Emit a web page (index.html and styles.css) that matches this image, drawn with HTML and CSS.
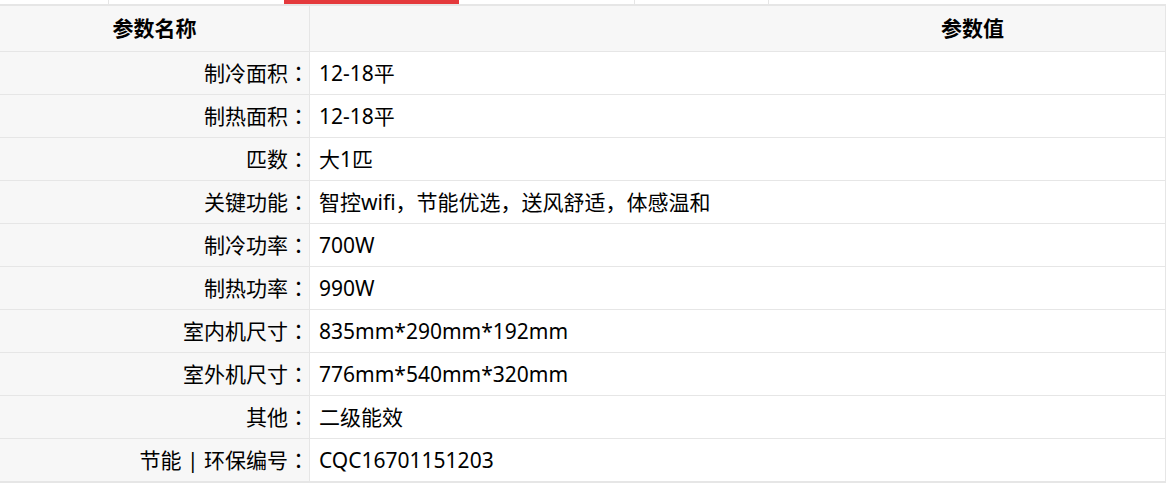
FILE: index.html
```html
<!DOCTYPE html>
<html lang="zh-CN">
<head>
<meta charset="utf-8">
<title>参数</title>
<link rel="stylesheet" href="styles.css">
</head>
<body>
<div class="tabs">
  <div class="tab t1"></div>
  <div class="tab t2"></div>
  <div class="tab t3 active"></div>
  <div class="tab t4"></div>
  <div class="tab t5"></div>
  <div class="tab t6"></div>
</div>
<table class="params">
  <thead>
    <tr>
      <th class="h-name">参数名称</th>
      <th class="h-value">参数值</th>
    </tr>
  </thead>
  <tbody>
    <tr><td class="name">制冷面积<span class="colon">：</span></td><td class="value">12-18平</td></tr>
    <tr><td class="name">制热面积<span class="colon">：</span></td><td class="value">12-18平</td></tr>
    <tr><td class="name">匹数<span class="colon">：</span></td><td class="value">大1匹</td></tr>
    <tr><td class="name">关键功能<span class="colon">：</span></td><td class="value">智控wifi，节能优选，送风舒适，体感温和</td></tr>
    <tr><td class="name">制冷功率<span class="colon">：</span></td><td class="value">700W</td></tr>
    <tr><td class="name">制热功率<span class="colon">：</span></td><td class="value">990W</td></tr>
    <tr><td class="name">室内机尺寸<span class="colon">：</span></td><td class="value">835mm*290mm*192mm</td></tr>
    <tr><td class="name">室外机尺寸<span class="colon">：</span></td><td class="value">776mm*540mm*320mm</td></tr>
    <tr><td class="name">其他<span class="colon">：</span></td><td class="value">二级能效</td></tr>
    <tr class="last"><td class="name">节能 | 环保编号<span class="colon">：</span></td><td class="value">CQC16701151203</td></tr>
  </tbody>
</table>
</body>
</html>
```
FILE: styles.css
```css
html, body {
  margin: 0;
  padding: 0;
  background: #fff;
}
body {
  font-family: "Noto Sans", "Noto Sans CJK SC", sans-serif;
  color: #000;
  width: 1166px;
}
.tabs {
  display: flex;
  height: 4px;
  border-bottom: 2px solid #e6e6e6;
}
.tab {
  height: 4px;
  border-right: 1px solid #e6e6e6;
  box-sizing: border-box;
}
.t1 { width: 109px; }
.t2 { width: 175px; border-right: none; }
.t3 { width: 175px; border-right: none; }
.t4 { width: 176px; }
.t5 { width: 134px; }
.t6 { flex: 1; border-right: none; }
.active { background: #e4393c; }

.params {
  width: 1166px;
  border-collapse: collapse;
  table-layout: fixed;
  font-size: 21px;
}
.params th,
.params td {
  padding: 0;
  border-bottom: 1px solid #e6e6e6;
}
.params th {
  height: 45px;
  background: #f7f7f7;
  font-weight: bold;
  font-size: 21px;
  line-height: 45px;
}
.h-name {
  width: 309px;
  text-align: center;
  border-right: 1px solid #e6e6e6;
}
.h-value {
  text-align: left;
  padding-left: 631px !important;
  border-right: 1px solid #e6e6e6;
}
.params td {
  height: 42px;
  line-height: 42px;
  white-space: nowrap;
}
.name {
  background: #f7f7f7;
  text-align: right;
  border-right: 1px solid #e6e6e6;
  padding-right: 0;
}
.colon {
  display: inline-block;
  width: 21px;
  text-align: center;
  line-height: 1;
  font-family: "Noto Sans CJK TC", sans-serif;
}
.value {
  padding-left: 9px !important;
  background: #fff;
  border-right: 1px solid #e6e6e6;
}
.last td {
  border-bottom: 2px solid #e6e6e6;
}
```
